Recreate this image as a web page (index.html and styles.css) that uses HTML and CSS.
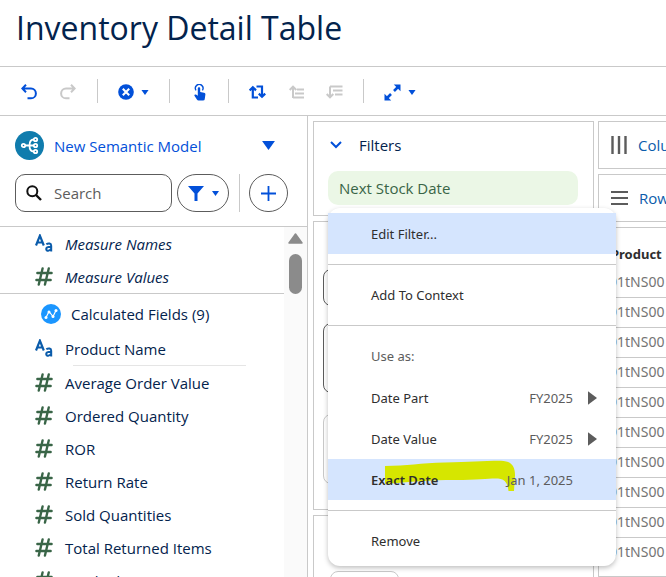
FILE: index.html
```html
<!DOCTYPE html>
<html lang="en">
<head>
<meta charset="utf-8">
<meta name="viewport" content="width=device-width, initial-scale=1">
<title>Inventory Detail Table</title>
<link rel="stylesheet" href="styles.css">
</head>
<body>
<svg class="sprite" aria-hidden="true">
  <symbol id="hash" viewBox="0 0 18 20"><path d="M7.5 1.5 3.5 18.5M14 1.5 10 18.5M2 6.3H17M1 13.7H16" fill="none" stroke="#396547" stroke-width="2.5" stroke-linecap="round"/></symbol>
  <symbol id="text" viewBox="0 0 18 18"><path d="M1 11 4.9 1.2 8.8 11M2.3 8H7.5" fill="none" stroke="#0b5cab" stroke-width="2.2"/><path d="M11.3 9.8C13.5 8.2 16.2 8.8 16.2 11.2V17M16.2 12.3C12.8 12.3 11.2 13 11.2 14.6 11.2 16.8 15 16.8 16.2 14.2" fill="none" stroke="#0b5cab" stroke-width="2"/></symbol>
  <symbol id="caret" viewBox="0 0 10 7"><path d="M0 0H10L5 7Z" fill="currentColor"/></symbol>
  <symbol id="next" viewBox="0 0 10 15"><path d="M0 0 10 7.5 0 15Z" fill="#5c5c5c"/></symbol>
</svg>

<header class="title"><h1>Inventory Detail Table</h1></header>

<div class="toolbar" role="toolbar" aria-label="Table actions">
  <button class="tool undo" aria-label="Undo"><svg width="16" height="16" viewBox="0 0 16 16"><path d="M1.500 4.500H10A4.800 4.800 0 0 1 10 14.300H6.500M5 .8 1.300 4.500 5 8.200" fill="none" stroke="currentColor" stroke-width="2"/></svg></button>
  <button class="tool redo" aria-label="Redo" disabled><svg width="16" height="16" viewBox="0 0 16 16"><path d="M14.500 4.500H6A4.800 4.800 0 0 0 6 14.300H9.500M11 .8 14.700 4.500 11 8.200" fill="none" stroke="currentColor" stroke-width="2"/></svg></button>
  <span class="rule"></span>
  <button class="tool clear" aria-label="Clear"><svg width="16" height="16" viewBox="0 0 16 16"><circle cx="8" cy="8" r="7.800" fill="currentColor"/><path d="M4.800 4.800 11.200 11.200M11.200 4.800 4.800 11.200" stroke="#fff" stroke-width="2.100"/></svg><svg width="8" height="5"><use href="#caret"/></svg></button>
  <span class="rule"></span>
  <button class="tool touch" aria-label="Interact"><svg width="12" height="17" viewBox="0 0 12 17"><path d="M2 6.300A3.800 3.800 0 1 1 8.400 6.300" fill="none" stroke="currentColor" stroke-width="1.400"/><path d="M3.800 4.400C3.800 2.900 6.200 2.900 6.200 4.400V8L10 8.800C11 9 11.500 9.600 11.400 10.600L10.700 15.200C10.600 16 10 16.400 9.300 16.400H4.500C3.800 16.400 3.300 16 2.900 15.500L.3 11.400C.5 10.400 1.800 10.200 3.800 11.800Z" fill="currentColor"/></svg></button>
  <span class="rule"></span>
  <button class="tool swap" aria-label="Swap rows and columns"><svg width="17" height="14" viewBox="0 0 17 14"><path d="M3.800 2V12.500H9M.6 5.400 3.800 2.200 7 5.400M7.500 1.500H13V12M9.800 8.600 13 11.800 16.200 8.600" fill="none" stroke="currentColor" stroke-width="2.200"/></svg></button>
  <button class="tool asc" aria-label="Sort ascending" disabled><svg width="16" height="14" viewBox="0 0 16 14"><path d="M4 13V2M.7 5 4 1.700 7.300 5M8 4.500H15M6 8.500H15M4 12.500H15" fill="none" stroke="currentColor" stroke-width="2"/></svg></button>
  <button class="tool desc" aria-label="Sort descending" disabled><svg width="17" height="14" viewBox="0 0 17 14"><path d="M4 1.500V12M.7 9 4 12.300 7.300 9M4 1.500H16.500M7 5.500H16.500M9 9.500H16.500" fill="none" stroke="currentColor" stroke-width="2"/></svg></button>
  <span class="rule"></span>
  <button class="tool fit" aria-label="Fit"><svg width="17" height="17" viewBox="0 0 17 17"><path d="M10 7 14.500 2.500M7 10 2.500 14.500" stroke="currentColor" stroke-width="2.600"/><path d="M9.800.5H16.500V7.200ZM.5 9.800V16.500H7.200Z" fill="currentColor"/></svg><svg width="8" height="5"><use href="#caret"/></svg></button>
</div>

<div class="workspace">
  <aside class="sidebar">
    <div class="source">
      <button class="model"><svg width="29" height="29" viewBox="0 0 29 29"><circle cx="14.500" cy="14.500" r="14.500" fill="#107cad"/><g fill="none" stroke="#fff" stroke-width="1.800"><circle cx="8.500" cy="14.500" r="1.700"/><circle cx="20.500" cy="8.500" r="1.700"/><circle cx="20.500" cy="14.500" r="1.700"/><circle cx="20.500" cy="20.500" r="1.700"/><path d="M10.200 14.500H18.800M18.800 8.500C15.500 8.500 14.500 10.500 14.500 14.500S15.500 20.500 18.800 20.500"/></g></svg><span class="model-name">New Semantic Model</span><svg width="13" height="9"><use href="#caret"/></svg></button>
      <div class="find">
        <label class="search"><svg width="16" height="16" viewBox="0 0 16 16"><circle cx="6.300" cy="6.300" r="5" fill="none" stroke="#111" stroke-width="2"/><path d="M10 10 15 15" stroke="#111" stroke-width="2.400"/></svg><input type="search" placeholder="Search" aria-label="Search"></label>
        <button class="pill-btn" aria-label="Filter fields"><svg width="16" height="15" viewBox="0 0 16 15"><path d="M0 0H16L9.500 7.500V15H6.500V7.500Z" fill="currentColor"/></svg><svg width="7" height="5"><use href="#caret"/></svg></button>
        <span class="rule"></span>
        <button class="round-btn" aria-label="Add field"><svg width="15" height="15" viewBox="0 0 15 15"><path d="M7.500 0V15M0 7.500H15" stroke="currentColor" stroke-width="1.800"/></svg></button>
      </div>
    </div>
    <div class="fields">
      <div class="field-lists">
        <ul class="list measures">
          <li><svg class="ico"><use href="#text"/></svg>Measure Names</li>
          <li><svg class="ico"><use href="#hash"/></svg>Measure Values</li>
        </ul>
        <div class="group"><svg width="20" height="20" viewBox="0 0 20 20"><circle cx="10" cy="10" r="10" fill="#1b96ff"/><path d="M5 13.500 8 7.500 12 12.500 15 6.500" fill="none" stroke="#fff" stroke-width="1.200"/><g fill="#fff"><circle cx="5" cy="13.500" r="1.500"/><circle cx="8" cy="8" r="1.500"/><circle cx="12" cy="12.500" r="1.500"/><circle cx="15" cy="6.500" r="1.500"/></g></svg>Calculated Fields (9)</div>
        <ul class="list dimensions">
          <li><svg class="ico"><use href="#text"/></svg>Product Name</li>
        </ul>
        <ul class="list">
          <li><svg class="ico"><use href="#hash"/></svg>Average Order Value</li>
          <li><svg class="ico"><use href="#hash"/></svg>Ordered Quantity</li>
          <li><svg class="ico"><use href="#hash"/></svg>ROR</li>
          <li><svg class="ico"><use href="#hash"/></svg>Return Rate</li>
          <li><svg class="ico"><use href="#hash"/></svg>Sold Quantities</li>
          <li><svg class="ico"><use href="#hash"/></svg>Total Returned Items</li>
          <li><svg class="ico"><use href="#hash"/></svg>Stocked</li>
        </ul>
      </div>
      <div class="scrollbar" aria-hidden="true"><svg width="15" height="11" viewBox="0 0 15 11"><path d="M7.500 1 14 10H1Z" fill="#8b8b8b" stroke="#8b8b8b" stroke-width="1.500" stroke-linejoin="round"/></svg><span class="thumb"></span></div>
    </div>
  </aside>

  <section class="shelves">
    <div class="card filters">
      <button class="section-toggle"><svg width="12" height="8" viewBox="0 0 12 8"><path d="M1 1 6 6 11 1" fill="none" stroke="#0250d9" stroke-width="2"/></svg>Filters</button>
      <div class="filter">
        <button class="chip">Next Stock Date</button>
        <div class="menu" role="menu">
          <button class="item active" role="menuitem">Edit Filter...</button>
          <hr>
          <button class="item" role="menuitem">Add To Context</button>
          <hr>
          <div class="item caption">Use as:</div>
          <button class="item" role="menuitem">Date Part<span class="value">FY2025</span><svg width="9" height="14"><use href="#next"/></svg></button>
          <button class="item" role="menuitem">Date Value<span class="value">FY2025</span><svg width="9" height="14"><use href="#next"/></svg></button>
          <button class="item active marked" role="menuitem"><svg class="marker" width="131" height="31" viewBox="0 0 131 31"><path d="M0 6C22 6 35 3 60 2.500S96 1 116 .8C126 1 130 6 130 15L129 31H123.500C123 25 121 19 113 18.500S95 20 70 20 25 22 0 24Z" fill="#d6e600"/></svg><strong>Exact Date</strong><span class="value">Jan 1, 2025</span></button>
          <hr>
          <button class="item" role="menuitem">Remove</button>
        </div>
      </div>
    </div>
    <div class="card marks">
      <div class="box small"></div>
      <div class="box tall"></div>
      <div class="box soft"></div>
    </div>
    <div class="card extra"><div class="tab"></div></div>
  </section>

  <main class="canvas">
    <div class="card shelf"><svg width="16" height="18" viewBox="0 0 16 18"><path d="M1.500 0V18M8 0V18M14.500 0V18" stroke="#5c5c5c" stroke-width="2.400"/></svg><span>Columns</span></div>
    <div class="card shelf"><svg width="17" height="14" viewBox="0 0 17 14"><path d="M0 1H17M0 7H17M0 13H17" stroke="#5c5c5c" stroke-width="2"/></svg><span>Rows</span></div>
    <div class="card grid">
      <table>
        <thead><tr><th>Product</th></tr></thead>
        <tbody>
          <tr><td>01tNS00</td></tr><tr><td>01tNS00</td></tr><tr><td>01tNS00</td></tr><tr><td>01tNS00</td></tr><tr><td>01tNS00</td></tr>
          <tr><td>01tNS00</td></tr><tr><td>01tNS00</td></tr><tr><td>01tNS00</td></tr><tr><td>01tNS00</td></tr><tr><td>01tNS00</td></tr>
        </tbody>
      </table>
    </div>
  </main>
</div>
</body>
</html>
```
FILE: styles.css
```css
:root {
  --line: #c9c9c9;
  --blue: #0250d9;
  --navy: #03234d;
}
* { box-sizing: border-box; }
body {
  margin: 0;
  height: 100vh;
  overflow: hidden;
  display: flex;
  flex-direction: column;
  background: #fff;
  color: var(--navy);
  font: 15px/20px "Open Sans", "Noto Sans", sans-serif;
}
button {
  border: 0;
  padding: 0;
  background: none;
  font: inherit;
  color: inherit;
  text-align: left;
}
svg { display: block; flex: none; }
.sprite { position: absolute; width: 0; height: 0; }
ul { list-style: none; margin: 0; padding: 0; }
.rule { width: 1px; background: var(--line); align-self: stretch; }

.title { padding: 6px 16px 16px; border-bottom: 1px solid var(--line); }
h1 { margin: 0; font-size: 32px; line-height: 44px; font-weight: 400; white-space: nowrap; }

.toolbar {
  display: flex;
  align-items: center;
  flex: none;
  height: 49px;
  padding: 12px 21px;
  border-bottom: 1px solid var(--line);
  color: var(--blue);
}
.tool { display: flex; align-items: center; gap: 7px; padding-top: 2px; }
.tool:disabled { color: var(--line); }
.redo { margin: 0 21px 0 23px; }
.clear { margin: 0 20px; }
.touch { margin: 0 22px 0 24px; }
.swap { margin-left: 20px; }
.asc { margin-left: 23px; }
.desc { margin: 0 20px 0 21px; }
.fit { margin-left: 20px; }

.workspace {
  flex: 1;
  min-height: 0;
  display: grid;
  grid-template-columns: 313px 281px minmax(0, 1fr);
}
.sidebar {
  display: flex;
  flex-direction: column;
  min-height: 0;
  margin-right: 5px;
  border-right: 1px solid var(--line);
}
.source { padding: 15px 19px 14px 15px; border-bottom: 1px solid var(--line); }
.model { display: flex; align-items: center; width: 100%; padding-right: 13px; color: var(--blue); }
.model-name { flex: 1; padding-left: 10px; }
.find { display: flex; gap: 5px; margin-top: 14px; }
.search {
  flex: 1;
  min-width: 0;
  display: flex;
  align-items: center;
  gap: 12px;
  height: 38px;
  padding: 0 10px;
  border: 1px solid #5c5c5c;
  border-radius: 10px;
}
.search input {
  flex: 1;
  min-width: 0;
  border: 0;
  padding: 0;
  outline: 0;
  background: none;
  font: inherit;
}
.search input::placeholder { color: #5c5c5c; opacity: 1; }
.pill-btn, .round-btn {
  display: flex;
  align-items: center;
  justify-content: center;
  gap: 8px;
  height: 38px;
  border: 1px solid #5c5c5c;
  border-radius: 19px;
  color: var(--blue);
}
.pill-btn { width: 52px; }
.find .rule { margin: 0 4px 0 5px; }
.round-btn { width: 39px; }

.fields { flex: 1; min-height: 0; display: flex; }
.field-lists { flex: 1; overflow: hidden; }
.list li {
  display: flex;
  align-items: center;
  gap: 12px;
  height: 33px;
  padding-left: 35px;
}
.ico { width: 18px; height: 19px; }
.measures { font-style: italic; height: 67px; border-bottom: 1px solid var(--line); }
.group {
  display: flex;
  align-items: center;
  gap: 10px;
  height: 38px;
  padding: 2px 0 0 41px;
}
.dimensions::after {
  content: "";
  display: block;
  height: 1px;
  margin: 0 38px 0 73px;
  background: #e5e5e5;
}
.scrollbar {
  width: 23px;
  padding-top: 6px;
  background: #fafafa;
  display: flex;
  flex-direction: column;
  align-items: center;
  gap: 10px;
}
.thumb { width: 13px; height: 40px; border-radius: 7px; background: #8b8b8b; }

.card { border: 1px solid var(--line); background: #fff; }
.shelves, .canvas { display: flex; flex-direction: column; min-height: 0; min-width: 0; gap: 5px; padding-top: 5px; }
.canvas { margin-left: 4px; }
.filters { padding: 13px 15px 10px 14px; }
.section-toggle { display: flex; align-items: center; gap: 17px; padding-left: 2px; }
.filter { position: relative; margin-top: 16px; z-index: 2; }
.chip {
  display: block;
  width: 100%;
  height: 34px;
  padding-left: 11px;
  border-radius: 10px;
  background: #ebf7e6;
  color: #396547;
}
.menu {
  position: absolute;
  top: 37px;
  left: 0;
  width: 288px;
  padding: 5px 0;
  border-radius: 12px;
  background: #fff;
  color: #2e2e2e;
  font-family: "Noto Sans", "Open Sans", sans-serif;
  font-size: 13px;
  box-shadow: 0 2px 5px rgba(0, 0, 0, .25);
}
.item {
  display: flex;
  align-items: center;
  width: 100%;
  height: 41px;
  padding: 0 19px 0 43px;
}
.item.active { background: #d5e5fe; }
.item.caption { height: 42px; color: #5c5c5c; }
.item strong { font-weight: 600; }
.value { margin-left: auto; color: #5c5c5c; }
.value + svg { margin-left: 15px; }
.marked { position: relative; padding-right: 43px; }
.marked strong, .marked .value { position: relative; }
.marker { position: absolute; left: 57px; top: 1px; }
.menu hr { height: 1px; margin: 10px 0 9px; border: 0; background: var(--line); }

.marks { flex: none; padding: 47px 9px 25px; }
.box { border: 1px solid #5c5c5c; border-radius: 8px; }
.small { height: 37px; }
.tall { height: 70px; margin: 17px 0 21px; }
.soft { height: 70px; border-color: var(--line); }
.extra { flex: 1; padding: 55px 16px 0; border-bottom: 0; overflow: hidden; }
.tab { width: 69px; height: 30px; border: 1px solid var(--line); border-radius: 8px; }

.canvas .card { border-right: 0; }
.shelf {
  display: flex;
  align-items: center;
  gap: 11px;
  flex: none;
  height: 48px;
  padding-left: 12px;
  color: #0b5cab;
  white-space: nowrap;
  overflow: hidden;
}
.grid {
  flex: 1;
  min-height: 0;
  padding-top: 13px;
  overflow: hidden;
  font-family: "Noto Sans", "Open Sans", sans-serif;
  font-size: 13px;
}
table { width: 100%; border-collapse: collapse; }
th, td { padding: 0 0 0 10px; text-align: left; }
th { height: 26px; padding-left: 12px; color: #2e2e2e; font-weight: 700; }
td { height: 30px; color: #747474; font-size: 14px; border-bottom: 1px solid var(--line); }
tr:last-child td { border-bottom: 0; }
```
